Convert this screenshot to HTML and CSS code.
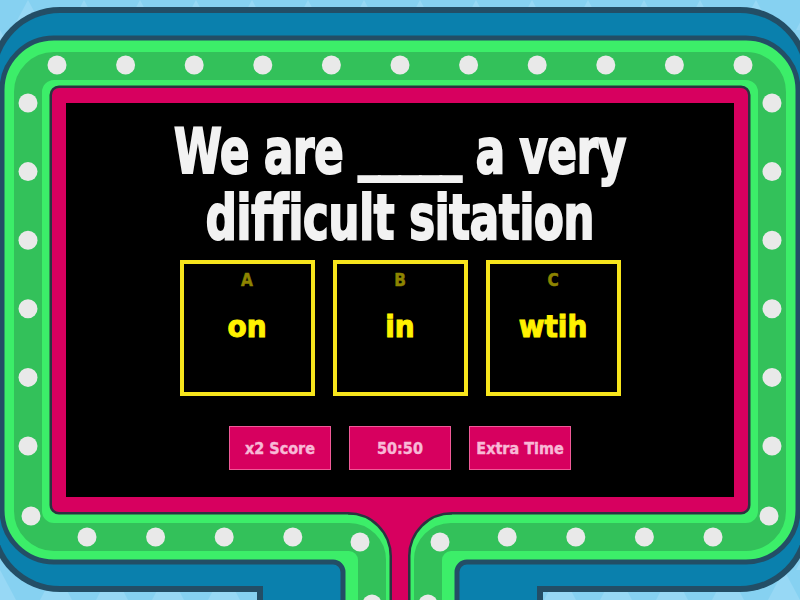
FILE: index.html
```html
<!DOCTYPE html>
<html>
<head>
<meta charset="utf-8">
<link rel="stylesheet" href="styles.css">
</head>
<body>
<div class="stage">
  <svg class="frame" width="800" height="600" viewBox="0 0 800 600">
    <defs>
      <pattern id="tri" width="56" height="60" patternUnits="userSpaceOnUse">
        <polygon points="28,0 44,30 12,30" fill="#9edbf6"/>
        <polygon points="0,30 16,60 -16,60" fill="#9edbf6"/>
        <polygon points="56,30 72,60 40,60" fill="#9edbf6"/>
      </pattern>
    </defs>
    <rect x="0" y="0" width="800" height="600" fill="#86d1f1"/>
    <rect x="0" y="0" width="800" height="600" fill="url(#tri)" opacity="0.7"/>
    <!-- outer blue band -->
    <rect x="-10" y="7" width="820" height="585" rx="70" fill="#234e66"/>
    <rect x="257" y="500" width="286" height="110" fill="#234e66"/>
    <rect x="-4" y="13" width="808" height="573" rx="64" fill="#0a80ad"/>
    <rect x="263" y="500" width="274" height="110" fill="#0a80ad"/>
    <!-- green band -->
    <path d="M2,90 A52,52 0 0 1 54,38 L746,38 A52,52 0 0 1 798,90 L798,510 A52,52 0 0 1 746,562 L467,562 A10,10 0 0 0 457,572 L457,612 L343,612 L343,572 A10,10 0 0 0 333,562 L54,562 A52,52 0 0 1 2,510 Z" fill="#3cee69" stroke="#234e66" stroke-width="5"/>
    <path d="M344,537 L54,537 A26,26 0 0 1 28,511 L28,92 A26,26 0 0 1 54,66 L746,66 A26,26 0 0 1 772,92 L772,511 A26,26 0 0 1 746,537 L456,537" fill="none" stroke="#33c15a" stroke-width="28"/>
    <path d="M372,612 L372,560 A23,23 0 0 0 349,537 L320,537 M428,612 L428,560 A23,23 0 0 1 451,537 L480,537" fill="none" stroke="#33c15a" stroke-width="28"/>
    <!-- dots -->
    <g fill="#e9e9e9">
      <circle cx="57" cy="65" r="9.5"/><circle cx="125.6" cy="65" r="9.5"/><circle cx="194.2" cy="65" r="9.5"/><circle cx="262.8" cy="65" r="9.5"/><circle cx="331.4" cy="65" r="9.5"/><circle cx="400" cy="65" r="9.5"/><circle cx="468.6" cy="65" r="9.5"/><circle cx="537.2" cy="65" r="9.5"/><circle cx="605.8" cy="65" r="9.5"/><circle cx="674.4" cy="65" r="9.5"/><circle cx="743" cy="65" r="9.5"/>
      <circle cx="28" cy="103" r="9.5"/><circle cx="28" cy="171.6" r="9.5"/><circle cx="28" cy="240.2" r="9.5"/><circle cx="28" cy="308.8" r="9.5"/><circle cx="28" cy="377.4" r="9.5"/><circle cx="28" cy="446" r="9.5"/><circle cx="31" cy="516" r="9.5"/>
      <circle cx="772" cy="103" r="9.5"/><circle cx="772" cy="171.6" r="9.5"/><circle cx="772" cy="240.2" r="9.5"/><circle cx="772" cy="308.8" r="9.5"/><circle cx="772" cy="377.4" r="9.5"/><circle cx="772" cy="446" r="9.5"/><circle cx="769" cy="516" r="9.5"/>
      <circle cx="87" cy="537" r="9.5"/><circle cx="155.6" cy="537" r="9.5"/><circle cx="224.2" cy="537" r="9.5"/><circle cx="292.8" cy="537" r="9.5"/><circle cx="360" cy="542" r="9.5"/><circle cx="372" cy="604" r="9.5"/>
      <circle cx="440" cy="542" r="9.5"/><circle cx="507.2" cy="537" r="9.5"/><circle cx="575.8" cy="537" r="9.5"/><circle cx="644.4" cy="537" r="9.5"/><circle cx="713" cy="537" r="9.5"/><circle cx="428" cy="604" r="9.5"/>
    </g>
    <!-- pink screen frame + stem -->
    <g fill="none" stroke="#2a3440" stroke-width="5">
      <rect x="52" y="88" width="696" height="424" rx="7"/>
      <path d="M348,512 A44,44 0 0 1 392,556 L392,612 L408,612 L408,556 A44,44 0 0 1 452,512 Z"/>
    </g>
    <g fill="#d7005f">
      <rect x="52" y="88" width="696" height="424" rx="7"/>
      <path d="M340,505 L348,512 A44,44 0 0 1 392,556 L392,612 L408,612 L408,556 A44,44 0 0 1 452,512 L460,505 Z"/>
    </g>
  </svg>
  <div class="screen">
    <h1 class="question">We are <span class="blank">_____</span> a very<br>difficult sitation</h1>
    <div class="answers">
      <div class="answer"><span class="letter">A</span><span class="word">on</span></div>
      <div class="answer"><span class="letter">B</span><span class="word">in</span></div>
      <div class="answer"><span class="letter">C</span><span class="word">wtih</span></div>
    </div>
    <div class="powerups">
      <div class="power">x2 Score</div>
      <div class="power">50:50</div>
      <div class="power">Extra Time</div>
    </div>
  </div>
</div>
</body>
</html>
```
FILE: styles.css
```css
html, body {
  margin: 0;
  padding: 0;
  background: #86d1f1;
}
.stage {
  position: relative;
  width: 800px;
  height: 600px;
  overflow: hidden;
  box-sizing: border-box;
  padding: 103px 66px 0 66px;
  font-family: "DejaVu Sans Condensed", "DejaVu Sans", sans-serif;
}
.frame {
  position: absolute;
  left: 0;
  top: 0;
}
.screen {
  position: relative;
  width: 668px;
  height: 394px;
  background: #000;
  display: flex;
  flex-direction: column;
  align-items: center;
}
.question {
  align-self: stretch;
  margin: 16px 0 0 0;
  color: #f2f2f2;
  font-family: "DejaVu Sans Condensed", "DejaVu Sans", sans-serif;
  font-size: 63px;
  line-height: 66px;
  font-weight: bold;
  text-align: center;
  letter-spacing: -0.3px;
  -webkit-text-stroke: 2.1px #f2f2f2;
  transform: scaleX(0.765);
}
.blank {
  letter-spacing: -1.5px;
  line-height: 0;
  vertical-align: 6px;
}
.answers {
  display: flex;
  gap: 18px;
  margin-top: 9px;
}
.answer {
  width: 127px;
  height: 128px;
  border: 4px solid #f7e51c;
  display: flex;
  flex-direction: column;
  align-items: center;
}
.letter {
  margin-top: 6px;
  color: #8d8400;
  font-size: 17px;
  line-height: 20px;
  font-weight: bold;
  -webkit-text-stroke: 0.5px #8d8400;
}
.word {
  margin-top: 18px;
  color: #fff200;
  font-size: 31px;
  line-height: 36px;
  font-weight: bold;
  -webkit-text-stroke: 1px #fff200;
}
.powerups {
  display: flex;
  gap: 18px;
  margin-top: 30px;
}
.power {
  width: 100px;
  height: 42px;
  background: #d7005f;
  border: 1px solid #ef5b98;
  color: #f8b9d6;
  font-size: 16px;
  font-weight: bold;
  -webkit-text-stroke: 0.4px #f8b9d6;
  display: flex;
  align-items: center;
  justify-content: center;
}
```
